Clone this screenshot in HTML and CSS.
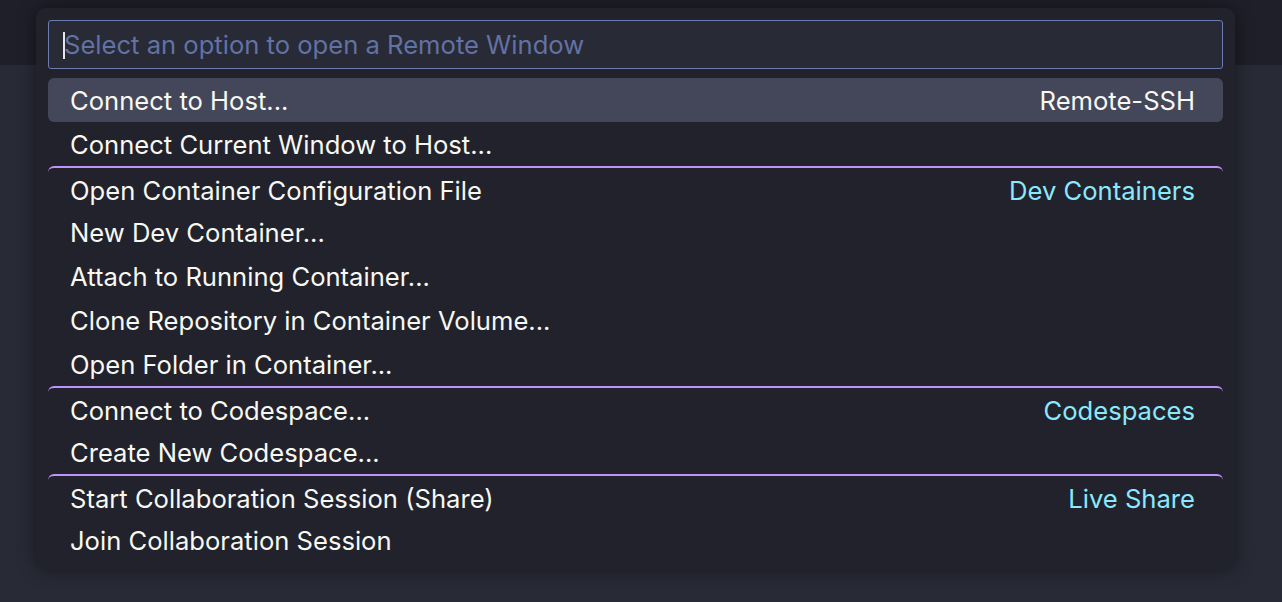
FILE: index.html
```html
<!DOCTYPE html>
<html lang="en">
<head>
<meta charset="utf-8">
<title>Remote Window</title>
<link rel="stylesheet" href="styles.css">
</head>
<body>
<div class="app">
  <div class="topbar"></div>
  <div class="editor"></div>
</div>
<div class="quickpick">
  <div class="input">
    <span class="caret"></span>
    <span class="placeholder">Select an option to open a Remote Window</span>
  </div>
  <div class="list">
    <div class="row selected"><span class="label">Connect to Host...</span><span class="desc">Remote-SSH</span></div>
    <div class="row"><span class="label">Connect Current Window to Host...</span></div>
    <div class="row sep"><span class="label">Open Container Configuration File</span><span class="desc">Dev Containers</span></div>
    <div class="row"><span class="label">New Dev Container...</span></div>
    <div class="row"><span class="label">Attach to Running Container...</span></div>
    <div class="row"><span class="label">Clone Repository in Container Volume...</span></div>
    <div class="row"><span class="label">Open Folder in Container...</span></div>
    <div class="row sep"><span class="label">Connect to Codespace...</span><span class="desc">Codespaces</span></div>
    <div class="row"><span class="label">Create New Codespace...</span></div>
    <div class="row sep"><span class="label">Start Collaboration Session (Share)</span><span class="desc">Live Share</span></div>
    <div class="row"><span class="label">Join Collaboration Session</span></div>
  </div>
</div>
</body>
</html>
```
FILE: styles.css
```css
html, body {
  margin: 0;
  padding: 0;
  height: 100%;
  background: #282a36;
  font-family: "Inter", "Noto Sans", sans-serif;
  overflow: hidden;
}
.app {
  display: flex;
  flex-direction: column;
  height: 100%;
}
.topbar {
  height: 65px;
  background: #1e1f29;
}
.editor {
  flex: 1;
  background: #282a36;
}
.quickpick {
  position: absolute;
  left: 36px;
  top: 8px;
  width: 1175px;
  padding: 12px 12px 8px;
  background: #21222c;
  border-radius: 10px;
  box-shadow: 0 0 18px rgba(0, 0, 0, 0.45);
}
.input {
  height: 47px;
  border: 1px solid #6c7bb0;
  border-radius: 3px;
  background: #282a36;
  display: flex;
  align-items: center;
  padding-left: 15px;
  position: relative;
}
.caret {
  width: 2px;
  height: 27px;
  background: #e6e6e6;
  position: absolute;
  left: 14px;
  top: 11px;
}
.placeholder {
  color: #6272a4;
  font-size: 25.6px;
}
.list {
  margin-top: 9px;
}
.row {
  height: 44px;
  box-sizing: border-box;
  display: flex;
  align-items: center;
  justify-content: space-between;
  padding: 0 28px 0 22px;
  border-radius: 6px;
  color: #f8f8f2;
  font-size: 25.6px;
}
.row.sep {
  border-top: 2px solid #bd93f9;
  padding-top: 3px;
}
.row.selected {
  background: #44475a;
}
.desc {
  color: #8be9fd;
}
.row.selected .desc {
  color: #f8f8f2;
}
```
